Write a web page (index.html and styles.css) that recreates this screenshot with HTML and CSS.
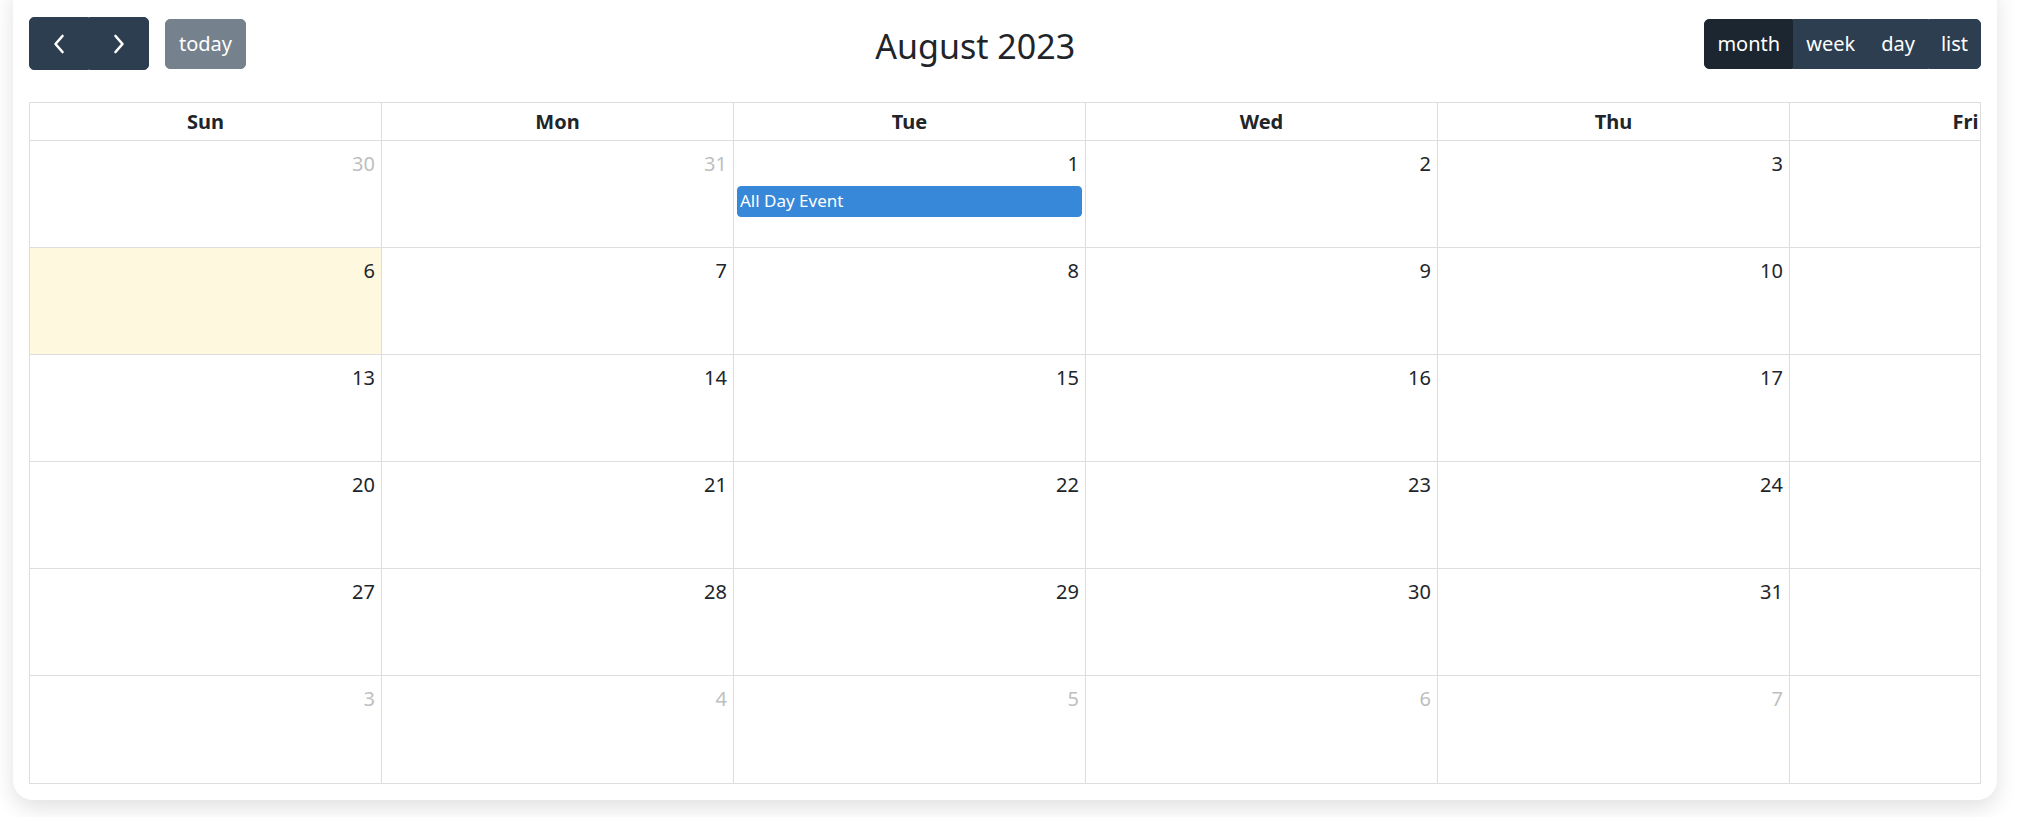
FILE: index.html
```html
<!DOCTYPE html>
<html>
<head>
    <title>Calendar</title>
    <link rel="stylesheet" href="styles.css">
</head>
<body>
    <div class="calendar-card">
        <div class="toolbar">
            <div class="toolbar-chunk">
                <div class="btn-group">
                    <button class="btn btn-icon" title="Previous month">
                        <svg width="14" height="20" viewBox="0 0 14 20"><path d="M10.5 2 L3.5 10 L10.5 18" fill="none" stroke="#fff" stroke-width="2.6" stroke-linecap="round" stroke-linejoin="round"/></svg>
                    </button>
                    <button class="btn btn-icon" title="Next month">
                        <svg width="14" height="20" viewBox="0 0 14 20"><path d="M3.5 2 L10.5 10 L3.5 18" fill="none" stroke="#fff" stroke-width="2.6" stroke-linecap="round" stroke-linejoin="round"/></svg>
                    </button>
                </div>
                <button class="btn btn-today" disabled>today</button>
            </div>
            <h2 class="toolbar-title">August 2023</h2>
            <div class="toolbar-chunk">
                <div class="btn-group">
                    <button class="btn active">month</button>
                    <button class="btn">week</button>
                    <button class="btn">day</button>
                    <button class="btn">list</button>
                </div>
            </div>
        </div>

        <div class="scrollgrid">
            <div class="grid-inner">
                <div class="head-row">
                    <div class="head-cell">Sun</div>
                    <div class="head-cell">Mon</div>
                    <div class="head-cell">Tue</div>
                    <div class="head-cell">Wed</div>
                    <div class="head-cell">Thu</div>
                    <div class="head-cell">Fri</div>
                    <div class="head-cell">Sat</div>
                </div>
                <div class="month-body" id="monthBody"></div>
            </div>
        </div>
    </div>

    <script>
        // August 2023 starts on a Tuesday, grid starts Sun Jul 30
        const body = document.getElementById('monthBody');
        const start = new Date(2023, 6, 30);
        const todayKey = '2023-8-6';

        for (let w = 0; w < 6; w++) {
            const row = document.createElement('div');
            row.className = 'week-row';
            for (let d = 0; d < 7; d++) {
                const date = new Date(start);
                date.setDate(start.getDate() + w * 7 + d);
                const cell = document.createElement('div');
                cell.className = 'day-cell';
                if (date.getMonth() !== 7) {
                    cell.classList.add('other-month');
                }
                const key = date.getFullYear() + '-' + (date.getMonth() + 1) + '-' + date.getDate();
                if (key === todayKey) {
                    cell.classList.add('today');
                }

                const num = document.createElement('div');
                num.className = 'day-number';
                num.textContent = date.getDate();
                cell.appendChild(num);

                if (key === '2023-8-1') {
                    const ev = document.createElement('div');
                    ev.className = 'event';
                    ev.textContent = 'All Day Event';
                    cell.appendChild(ev);
                }
                row.appendChild(cell);
            }
            body.appendChild(row);
        }
    </script>
</body>
</html>
```

FILE: styles.css
```css
body {
    margin: 0;
    min-height: 100vh;
    background-color: #fff;
    font-family: "Noto Sans", "Open Sans", sans-serif;
    font-size: 20px;
    color: #212529;
    overflow: hidden;
}

.calendar-card {
    margin: -20px 21px 0 13px;
    padding: 37px 16px 16px;
    background-color: #fff;
    border-radius: 20px;
    box-shadow: 0 8px 22px rgba(0, 0, 0, 0.12);
}

/* Toolbar */
.toolbar {
    display: flex;
    justify-content: space-between;
    align-items: center;
    margin-bottom: 32px;
}

.toolbar-chunk {
    display: flex;
    align-items: center;
}

.toolbar-title {
    margin: 0;
    padding-top: 5px;
    font-size: 34px;
    font-weight: 400;
    line-height: 1.2;
}

.btn {
    font-family: inherit;
    font-size: 20px;
    line-height: 30px;
    padding: 9px 12px;
    height: 50px;
    color: #fff;
    background-color: #2c3e50;
    border: 1px solid #2c3e50;
    border-radius: 5px;
    cursor: pointer;
}

.btn.active {
    background-color: #1c2630;
    border-color: #1c2630;
}

.btn-group {
    display: flex;
}

.btn-group .btn {
    border-radius: 0;
}

.btn-group .btn:first-child {
    border-radius: 5px 0 0 5px;
}

.btn-group .btn:last-child {
    border-radius: 0 5px 5px 0;
}

.btn-icon {
    width: 60px;
    height: 53px;
    display: flex;
    align-items: center;
    justify-content: center;
}

.btn-today {
    margin-left: 16px;
    width: 81px;
    padding: 9px 0;
    opacity: 0.65;
    cursor: default;
}

/* Grid */
.scrollgrid {
    border: 1px solid #ddd;
    overflow: hidden;
}

.grid-inner {
    width: 2464px;
}

.head-row,
.week-row {
    display: grid;
    grid-template-columns: repeat(7, 352px);
}

.head-cell {
    height: 38px;
    box-sizing: border-box;
    border-right: 1px solid #ddd;
    border-bottom: 1px solid #ddd;
    text-align: center;
    font-weight: 700;
    line-height: 38px;
}

.day-cell {
    height: 107px;
    box-sizing: border-box;
    border-right: 1px solid #ddd;
    border-bottom: 1px solid #ddd;
}

.week-row:last-child .day-cell {
    border-bottom: none;
    height: 107px;
}

.day-cell.today {
    background-color: #fef8de;
}

.day-number {
    text-align: right;
    padding: 9px 6px 0;
    line-height: 28px;
}

.other-month .day-number {
    color: #bdbfc1;
}

.event {
    margin: 8px 3px 0;
    height: 31px;
    box-sizing: border-box;
    padding: 0 2px;
    background-color: #3788d8;
    border: 1px solid #3788d8;
    border-radius: 4px;
    color: #fff;
    font-size: 17px;
    line-height: 28px;
}
```
